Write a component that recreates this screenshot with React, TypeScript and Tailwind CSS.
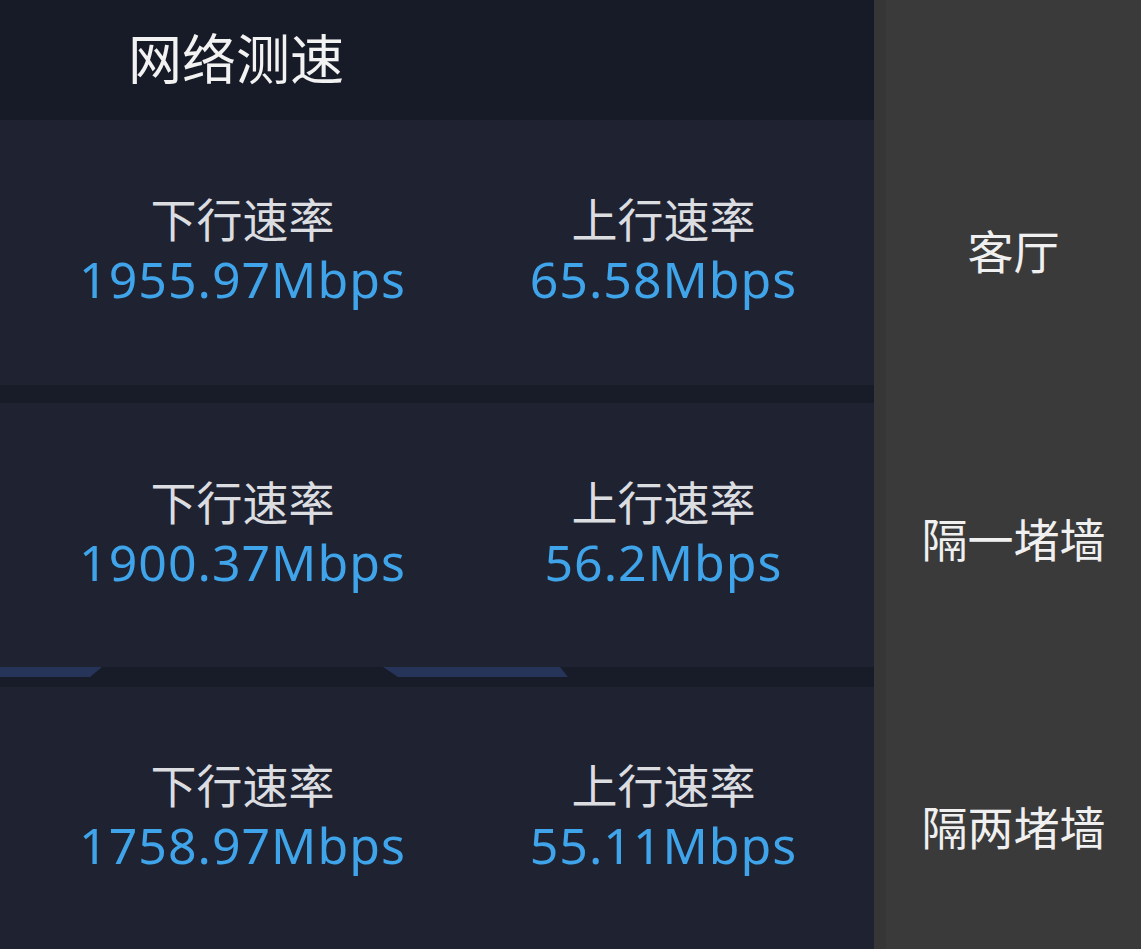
const rows = [
  { down: "1955.97Mbps", up: "65.58Mbps" },
  { down: "1900.37Mbps", up: "56.2Mbps" },
  { down: "1758.97Mbps", up: "55.11Mbps" },
]

const places = ["客厅", "隔一堵墙", "隔两堵墙"]

const cjk = { fontFamily: '"Noto Sans CJK SC", "Noto Sans", sans-serif' }
const num = { fontFamily: '"Noto Sans", "Noto Sans CJK SC", sans-serif' }

function Stat({ label, value }: { label: string; value: string }) {
  return (
    <div className="flex flex-col items-center gap-[14px]">
      <div className="text-[46px] leading-[46px] text-[#dcdde0]" style={cjk}>
        {label}
      </div>
      <div className="text-[50px] leading-[50px] tracking-[1px] text-[#3fa4ea]" style={num}>
        {value}
      </div>
    </div>
  )
}

function Row({ down, up, h }: { down: string; up: string; h: string }) {
  return (
    <div className={`grid shrink-0 grid-cols-2 items-center bg-[#1f2331] pb-[7px] pl-8 ${h}`}>
      <Stat label="下行速率" value={down} />
      <Stat label="上行速率" value={up} />
    </div>
  )
}

export default function App() {
  return (
    <div className="flex h-[949px] w-[1141px] overflow-hidden bg-[#181c28]">
      <div className="flex w-[874px] flex-col">
        <div className="flex h-[120px] shrink-0 items-center bg-[#171b27] pb-[6px] pl-[128px]">
          <span className="text-[54px] leading-[54px] text-[#f2f2f2]" style={cjk}>
            网络测速
          </span>
        </div>
        <Row down={rows[0].down} up={rows[0].up} h="h-[265px]" />
        <div className="h-[18px] shrink-0 bg-[#181c28]" />
        <Row down={rows[1].down} up={rows[1].up} h="h-[264px]" />
        <div className="h-[20px] shrink-0 bg-[#181c28]">
          <svg width="874" height="20" viewBox="0 0 874 20" className="block">
            <polygon points="0,0 102,0 90,10 0,10" fill="#26345a" />
            <polygon points="383,0 560,0 568,10 398,10" fill="#26345a" />
          </svg>
        </div>
        <Row down={rows[2].down} up={rows[2].up} h="h-[262px]" />
      </div>
      <div className="flex flex-1 flex-col border-l-[12px] border-[#363636] bg-[#3a3a3a] pt-[105px]">
        {places.map((p) => (
          <div key={p} className="flex h-[288px] shrink-0 items-center justify-center">
            <span className="text-[46px] leading-[46px] text-[#f0f0f0]" style={cjk}>
              {p}
            </span>
          </div>
        ))}
      </div>
    </div>
  )
}
